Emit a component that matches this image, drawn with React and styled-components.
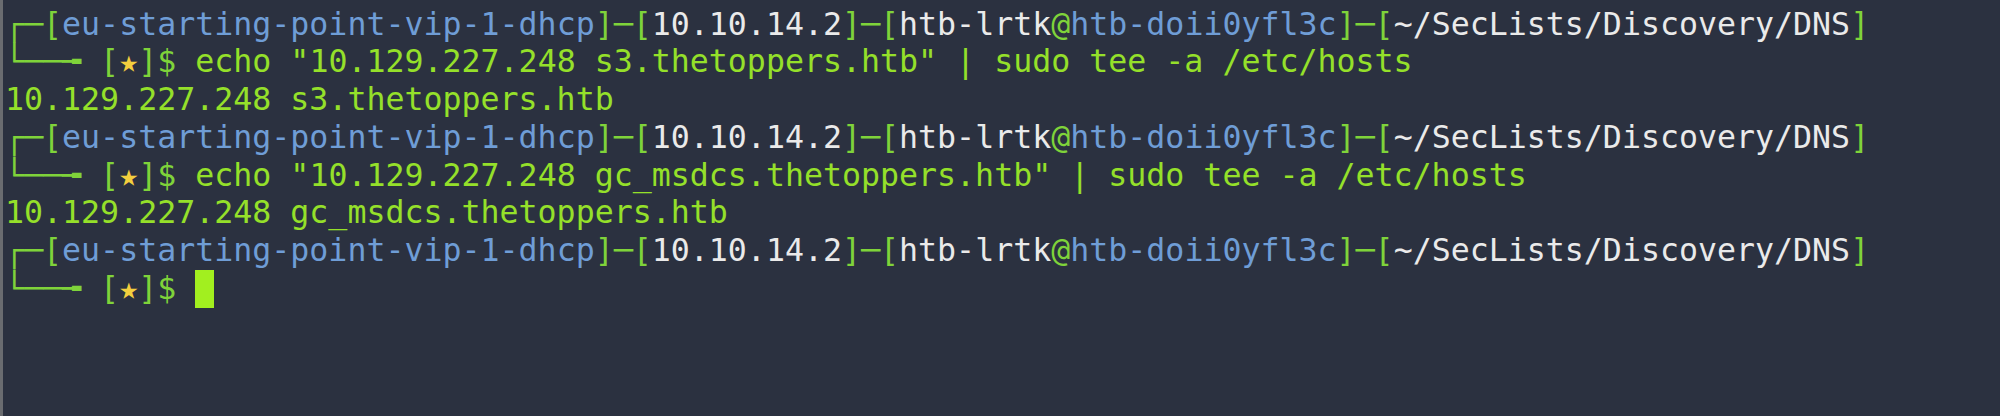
import React from 'react'
import styled, { createGlobalStyle } from 'styled-components'

const Global = createGlobalStyle`
  html, body {
    margin: 0;
    padding: 0;
    background: #2b3140;
  }
`

const Window = styled.div`
  width: 2000px;
  height: 416px;
  box-sizing: border-box;
  background: #2b3140;
  border-left: 3px solid #6a6c70;
  padding: 5.5px 0 0 2px;
  overflow: hidden;
`

const Screen = styled.pre`
  margin: 0;
  font-family: "DejaVu Sans Mono", "Liberation Mono", monospace;
  font-size: 31.6px;
  line-height: 37.8px;
  color: #e6e6e6;
  white-space: pre;
`

const Row = styled.div`
  height: 37.8px;
`

const colors = {
  green: '#7fd33a',
  cmd: '#95e02a',
  blue: '#6f9dd6',
  white: '#eaeaea',
  star: '#f3cf3e',
}

const Txt = styled.span`
  color: ${p => colors[p.$c] || colors.white};
`

const Cursor = styled.span`
  display: inline-block;
  width: 0.602em;
  height: 37.8px;
  vertical-align: top;
  background: #a2ef1f;
`

const PromptTop = () => (
  <Row>
    <Txt $c="green">┌─[</Txt>
    <Txt $c="blue">eu-starting-point-vip-1-dhcp</Txt>
    <Txt $c="green">]─[</Txt>
    <Txt $c="white">10.10.14.2</Txt>
    <Txt $c="green">]─[</Txt>
    <Txt $c="white">htb-lrtk</Txt>
    <Txt $c="green">@</Txt>
    <Txt $c="blue">htb-doii0yfl3c</Txt>
    <Txt $c="green">]─[</Txt>
    <Txt $c="white">~/SecLists/Discovery/DNS</Txt>
    <Txt $c="green">]</Txt>
  </Row>
)

const PromptBottom = ({ cmd, cursor }) => (
  <Row>
    <Txt $c="green">└──╼ [</Txt>
    <Txt $c="star">★</Txt>
    <Txt $c="green">]$ </Txt>
    {cmd && <Txt $c="cmd">{cmd}</Txt>}
    {cursor && <Cursor />}
  </Row>
)

const Output = ({ children }) => (
  <Row>
    <Txt $c="cmd">{children}</Txt>
  </Row>
)

const history = [
  'echo "10.129.227.248 s3.thetoppers.htb" | sudo tee -a /etc/hosts',
  'echo "10.129.227.248 gc_msdcs.thetoppers.htb" | sudo tee -a /etc/hosts',
]
const outputs = ['10.129.227.248 s3.thetoppers.htb', '10.129.227.248 gc_msdcs.thetoppers.htb']

export default function App() {
  return (
    <>
      <Global />
      <Window>
        <Screen>
          {history.map((cmd, i) => (
            <React.Fragment key={i}>
              <PromptTop />
              <PromptBottom cmd={cmd} />
              <Output>{outputs[i]}</Output>
            </React.Fragment>
          ))}
          <PromptTop />
          <PromptBottom cursor />
        </Screen>
      </Window>
    </>
  )
}
